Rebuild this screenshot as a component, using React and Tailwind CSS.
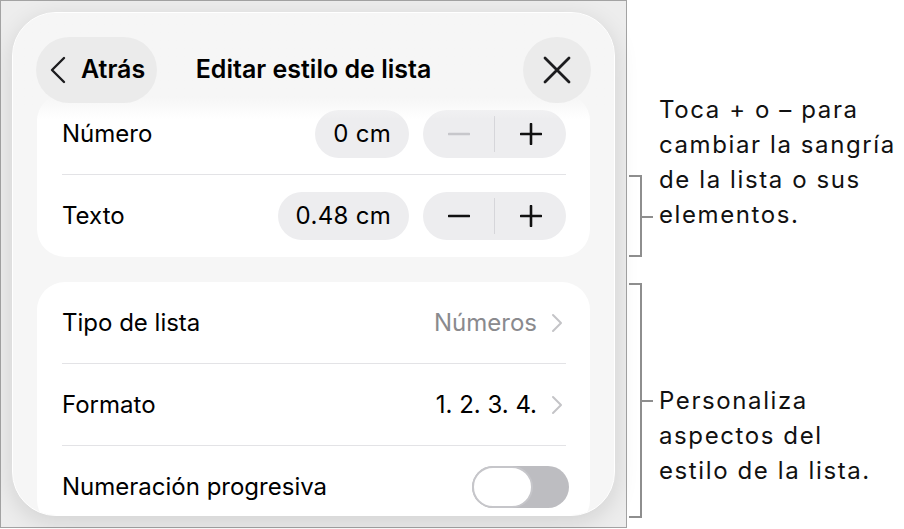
import React from 'react';

// Bracket drawn beside a callout: "]" shape with a short tick pointing to the text
function Bracket({ height, tick }) {
  return (
    <svg width="24" height={height} viewBox={`0 0 24 ${height}`} className="shrink-0">
      <path
        d={`M0 1 H12 V${height - 1} H0 M12 ${tick} H24`}
        fill="none"
        stroke="#8e8e8e"
        strokeWidth="2"
      />
    </svg>
  );
}

function Chevron() {
  return (
    <svg width="12" height="20" viewBox="0 0 12 20" className="ml-[14px] mr-[3px]">
      <path d="M2 2 L10 10 L2 18" fill="none" stroke="#c4c4c7" strokeWidth="2" strokeLinecap="round" strokeLinejoin="round" />
    </svg>
  );
}

function Stepper({ minusDisabled }) {
  return (
    <div className="ml-[14px] flex h-[48px] w-[143px] items-center rounded-full bg-[#ededef]">
      <div className="flex flex-1 items-center justify-center">
        <svg width="22" height="4" viewBox="0 0 22 4">
          <path d="M1 2 H21" stroke={minusDisabled ? '#c7c7cb' : '#111'} strokeWidth="2.6" strokeLinecap="round" />
        </svg>
      </div>
      <div className="h-[36px] w-px bg-[#d6d6da]" />
      <div className="flex flex-1 items-center justify-center">
        <svg width="22" height="22" viewBox="0 0 22 22">
          <path d="M1 11 H21 M11 1 V21" stroke="#111" strokeWidth="2.6" strokeLinecap="round" />
        </svg>
      </div>
    </div>
  );
}

function IndentRow({ label, value, minusDisabled, divider }) {
  return (
    <div className={`flex h-[82px] items-center ${divider ? 'border-b border-[#e3e3e6]' : ''}`}>
      <span className="flex-1">{label}</span>
      <div className="flex h-[48px] items-center rounded-full bg-[#ededef] px-[18px] tracking-[0.3px]">{value}</div>
      <Stepper minusDisabled={minusDisabled} />
    </div>
  );
}

function LinkRow({ label, value, muted, divider }) {
  return (
    <div className={`flex h-[82px] items-center ${divider ? 'border-b border-[#e3e3e6]' : ''}`}>
      <span className="flex-1">{label}</span>
      <span className={muted ? 'text-[#8a8a8e]' : 'text-black'}>{value}</span>
      <Chevron />
    </div>
  );
}

export default function App() {
  return (
    <div className="flex h-[529px] w-[904px] bg-white text-black" style={{ fontFamily: 'Inter, "Noto Sans", sans-serif' }}>
      {/* device frame */}
      <div className="h-[528px] w-[627px] shrink-0 border border-[#a3a3a3] bg-[#ededed] p-[11px]">
        <div className="relative h-full overflow-hidden rounded-[44px] border-[1.5px] border-white bg-[#f6f6f6] shadow-[0_6px_24px_rgba(0,0,0,0.12)]">
          {/* scrolling content */}
          <div className="flex flex-col gap-[25px] px-[24px] pt-[80px] text-[24px]">
            <div className="rounded-[28px] bg-white pl-[25px] pr-[24px]">
              <IndentRow label="Número" value="0 cm" minusDisabled divider />
              <IndentRow label="Texto" value="0.48 cm" />
            </div>
            <div className="rounded-[28px] bg-white pl-[25px] pr-[24px]">
              <LinkRow label="Tipo de lista" value="Números" muted divider />
              <LinkRow label="Formato" value="1. 2. 3. 4." divider />
              <div className="flex h-[82px] items-center">
                <span className="flex-1">Numeración progresiva</span>
                <div className="-mr-[3px] flex h-[42px] w-[97px] items-center rounded-full bg-[#bdbdc1]">
                  <div className="h-[42px] w-[61px] rounded-full border-2 border-[#c6c6ca] bg-white" />
                </div>
              </div>
            </div>
          </div>

          {/* navigation bar floating over the list */}
          <div className="absolute inset-x-0 top-0 grid h-[106px] grid-cols-[1fr_auto_1fr] items-start bg-gradient-to-b from-[#f6f6f6] from-80% to-transparent px-[23px] pt-[24px]">
            <div className="flex">
              <div className="flex h-[66px] items-center rounded-full bg-[#ebebeb] pl-[13px] pr-[12px]">
                <svg width="18" height="28" viewBox="0 0 18 28">
                  <path d="M15 2 L3 14 L15 26" fill="none" stroke="#1c1c1e" strokeWidth="2.4" strokeLinecap="round" strokeLinejoin="round" />
                </svg>
                <span className="ml-[14px] text-[25px] font-semibold">Atrás</span>
              </div>
            </div>
            <div className="flex h-[66px] items-center text-[25px] font-semibold">Editar estilo de lista</div>
            <div className="flex justify-end">
              <div className="flex h-[66px] w-[68px] items-center justify-center rounded-full bg-[#ebebeb]">
                <svg width="28" height="28" viewBox="0 0 28 28">
                  <path d="M2 2 L26 26 M26 2 L2 26" stroke="#1c1c1e" strokeWidth="2.8" strokeLinecap="round" />
                </svg>
              </div>
            </div>
          </div>
        </div>
      </div>

      {/* callouts */}
      <div className="flex flex-col pl-[2px] text-[24px] leading-[35px] tracking-[1.6px] text-[#111]">
        <div className="mt-[92px] flex items-start">
          <div className="mt-[83px]">
            <Bracket height={82} tick={42} />
          </div>
          <p className="ml-[6px]">
            Toca + o – para<br />cambiar la sangría<br />de la lista o sus<br />elementos.
          </p>
        </div>
        <div className="mt-[26px] flex items-start">
          <Bracket height={235} tick={118} />
          <p className="ml-[6px] mt-[100px]">
            Personaliza<br />aspectos del<br />estilo de la lista.
          </p>
        </div>
      </div>
    </div>
  );
}
